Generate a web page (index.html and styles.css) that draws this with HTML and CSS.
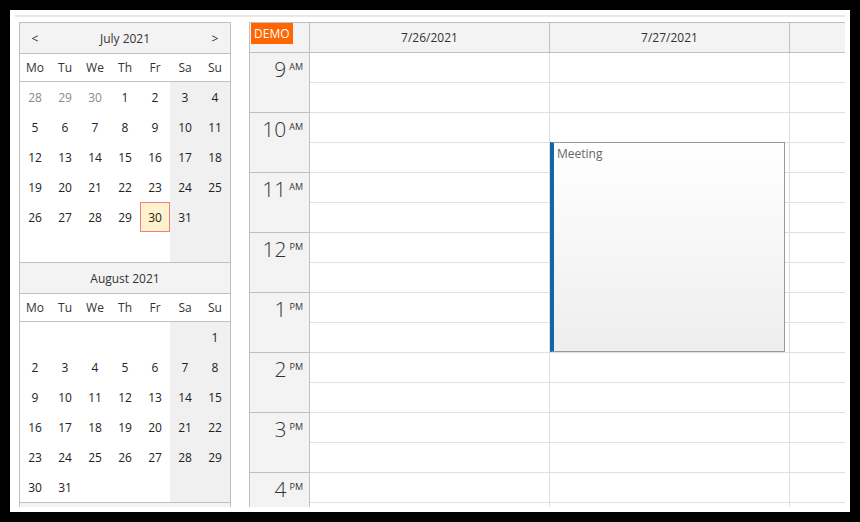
FILE: index.html
```html
<!DOCTYPE html>
<html lang="en">
<head>
    <meta charset="UTF-8">
    <title>Calendar</title>
    <link rel="stylesheet" href="styles.css">
</head>
<body>
    <div class="frame">
        <div class="topline"></div>
        <div class="main">
            <!-- Navigator -->
            <div class="nav">
                <div class="month">
                    <div class="month-title">
                        <span class="arrow">&lt;</span>
                        <span class="title">July 2021</span>
                        <span class="arrow">&gt;</span>
                    </div>
                    <div class="daynames">
                        <span>Mo</span><span>Tu</span><span>We</span><span>Th</span><span>Fr</span><span>Sa</span><span>Su</span>
                    </div>
                    <div class="days">
                        <span class="day other">28</span><span class="day other">29</span><span class="day other">30</span><span class="day">1</span><span class="day">2</span><span class="day">3</span><span class="day">4</span>
                        <span class="day">5</span><span class="day">6</span><span class="day">7</span><span class="day">8</span><span class="day">9</span><span class="day">10</span><span class="day">11</span>
                        <span class="day">12</span><span class="day">13</span><span class="day">14</span><span class="day">15</span><span class="day">16</span><span class="day">17</span><span class="day">18</span>
                        <span class="day">19</span><span class="day">20</span><span class="day">21</span><span class="day">22</span><span class="day">23</span><span class="day">24</span><span class="day">25</span>
                        <span class="day">26</span><span class="day">27</span><span class="day">28</span><span class="day">29</span><span class="day today">30</span><span class="day">31</span><span class="day"></span>
                        <span class="day"></span><span class="day"></span><span class="day"></span><span class="day"></span><span class="day"></span><span class="day"></span><span class="day"></span>
                    </div>
                </div>
                <div class="month">
                    <div class="month-title">
                        <span class="title">August 2021</span>
                    </div>
                    <div class="daynames">
                        <span>Mo</span><span>Tu</span><span>We</span><span>Th</span><span>Fr</span><span>Sa</span><span>Su</span>
                    </div>
                    <div class="days">
                        <span class="day"></span><span class="day"></span><span class="day"></span><span class="day"></span><span class="day"></span><span class="day"></span><span class="day">1</span>
                        <span class="day">2</span><span class="day">3</span><span class="day">4</span><span class="day">5</span><span class="day">6</span><span class="day">7</span><span class="day">8</span>
                        <span class="day">9</span><span class="day">10</span><span class="day">11</span><span class="day">12</span><span class="day">13</span><span class="day">14</span><span class="day">15</span>
                        <span class="day">16</span><span class="day">17</span><span class="day">18</span><span class="day">19</span><span class="day">20</span><span class="day">21</span><span class="day">22</span>
                        <span class="day">23</span><span class="day">24</span><span class="day">25</span><span class="day">26</span><span class="day">27</span><span class="day">28</span><span class="day">29</span>
                        <span class="day">30</span><span class="day">31</span><span class="day"></span><span class="day"></span><span class="day"></span><span class="day"></span><span class="day"></span>
                    </div>
                </div>
                <!-- next month, scrolled out of view -->
                <div class="month">
                    <div class="month-title"></div>
                </div>
            </div>

            <!-- Calendar -->
            <div class="cal">
                <div class="cal-head">
                    <div class="corner"><span class="demo">DEMO</span></div>
                    <div class="date-head">7/26/2021</div>
                    <div class="date-head">7/27/2021</div>
                    <div class="date-head"></div>
                </div>
                <div class="cal-body">
                    <div class="hours">
                        <div class="hour"><span class="num">9</span><span class="ampm">AM</span></div>
                        <div class="hour"><span class="num">10</span><span class="ampm">AM</span></div>
                        <div class="hour"><span class="num">11</span><span class="ampm">AM</span></div>
                        <div class="hour"><span class="num">12</span><span class="ampm">PM</span></div>
                        <div class="hour"><span class="num">1</span><span class="ampm">PM</span></div>
                        <div class="hour"><span class="num">2</span><span class="ampm">PM</span></div>
                        <div class="hour"><span class="num">3</span><span class="ampm">PM</span></div>
                        <div class="hour"><span class="num">4</span><span class="ampm">PM</span></div>
                    </div>
                    <div class="col">
                        <div class="cell"></div><div class="cell"></div><div class="cell"></div><div class="cell"></div>
                        <div class="cell"></div><div class="cell"></div><div class="cell"></div><div class="cell"></div>
                        <div class="cell"></div><div class="cell"></div><div class="cell"></div><div class="cell"></div>
                        <div class="cell"></div><div class="cell"></div><div class="cell"></div><div class="cell"></div>
                    </div>
                    <div class="col">
                        <div class="cell"></div><div class="cell"></div><div class="cell"></div><div class="cell"></div>
                        <div class="cell"></div><div class="cell"></div><div class="cell"></div><div class="cell"></div>
                        <div class="cell"></div><div class="cell"></div><div class="cell"></div><div class="cell"></div>
                        <div class="cell"></div><div class="cell"></div><div class="cell"></div><div class="cell"></div>
                        <div class="event">Meeting</div>
                    </div>
                    <div class="col">
                        <div class="cell"></div><div class="cell"></div><div class="cell"></div><div class="cell"></div>
                        <div class="cell"></div><div class="cell"></div><div class="cell"></div><div class="cell"></div>
                        <div class="cell"></div><div class="cell"></div><div class="cell"></div><div class="cell"></div>
                        <div class="cell"></div><div class="cell"></div><div class="cell"></div><div class="cell"></div>
                    </div>
                </div>
            </div>
        </div>
    </div>
</body>
</html>
```

FILE: styles.css
```css
* {
    margin: 0;
    padding: 0;
    box-sizing: border-box;
    font-family: "Open Sans", "Noto Sans", sans-serif;
}

body {
    background: #000;
}

.frame {
    margin: 10px;
    width: 840px;
    height: 502px;
    background: #fff;
    overflow: hidden;
}

.topline {
    height: 2px;
    margin: 5px 5px 0;
    background: #e8e8e8;
}

.main {
    display: flex;
    gap: 18px;
    height: 490px;
    padding: 5px 0 0 9px;
    overflow: hidden;
}

/* Navigator */
.nav {
    flex: none;
    align-self: flex-start;
    width: 212px;
    border: 1px solid #c0c0c0;
    font-size: 12px;
    color: #222;
}

.month + .month {
    border-top: 1px solid #c0c0c0;
}

.month-title,
.daynames,
.days {
    display: grid;
    grid-template-columns: repeat(7, 30px);
}

.month-title {
    height: 31px;
    align-items: center;
    background: #f3f3f3;
    border-bottom: 1px solid #c0c0c0;
    color: #333;
    text-align: center;
}

.month-title .title {
    grid-column: 2 / span 5;
}

.daynames {
    height: 28px;
    align-items: center;
    text-align: center;
    border-bottom: 1px solid #c0c0c0;
    color: #333;
}

.days {
    grid-auto-rows: 30px;
}

.day {
    display: flex;
    align-items: center;
    justify-content: center;
}

.day:nth-child(7n+6),
.day:nth-child(7n) {
    background: #f0f0f0;
}

.day.other {
    color: #8a8a8a;
}

.day.today {
    background: #fff2cc;
    border: 1px solid #f08080;
}

/* Calendar */
.cal {
    flex: none;
    width: 596px;
    border-left: 1px solid #c0c0c0;
    border-top: 1px solid #c0c0c0;
    overflow: hidden;
    color: #333;
}

.cal-head {
    display: flex;
    height: 30px;
    background: #f3f3f3;
    border-bottom: 1px solid #c0c0c0;
}

.corner {
    flex: none;
    display: flex;
    align-items: flex-start;
    width: 60px;
    padding-left: 1px;
    border-right: 1px solid #c0c0c0;
}

.demo {
    background: #ff6600;
    color: #fff;
    font-size: 12px;
    line-height: 21px;
    padding: 0 3px;
}

.date-head {
    flex: none;
    width: 240px;
    border-right: 1px solid #c0c0c0;
    font-size: 12px;
    line-height: 30px;
    text-align: center;
}

.cal-body {
    display: flex;
}

.hours {
    flex: none;
    width: 60px;
    background: #f3f3f3;
    border-right: 1px solid #c0c0c0;
}

.hour {
    display: flex;
    justify-content: flex-end;
    align-items: flex-start;
    height: 60px;
    padding: 4px 6px 0 0;
    border-bottom: 1px solid #c0c0c0;
}

.hour .num {
    font-size: 21px;
    font-weight: 300;
    line-height: 24px;
}

.hour .ampm {
    font-size: 9px;
    line-height: 1;
    margin: 5px 0 0 3px;
}

.col {
    position: relative;
    flex: none;
    width: 240px;
    border-right: 1px solid #ddd;
}

.cell {
    height: 30px;
    border-bottom: 1px solid #e0e0e0;
}

.event {
    position: absolute;
    top: 89px;
    left: 0;
    width: 235px;
    height: 210px;
    padding: 2px 0 0 3px;
    border: 1px solid #999;
    border-left: 4px solid #1066a8;
    background: linear-gradient(#fff, #eee);
    font-size: 12px;
    color: #666;
}
```
